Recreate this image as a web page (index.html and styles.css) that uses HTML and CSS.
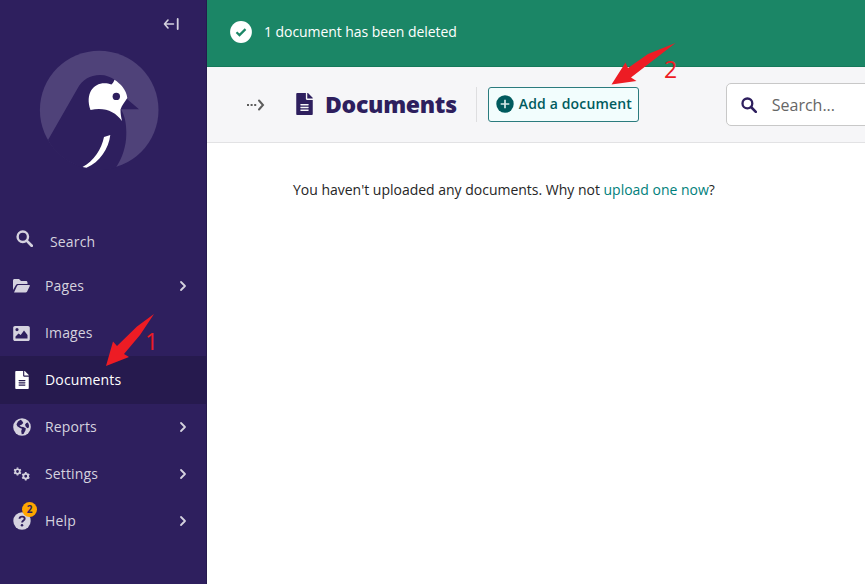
FILE: index.html
```html
<!DOCTYPE html>
<html lang="en">
<head>
<meta charset="utf-8">
<title>Documents</title>
<link rel="stylesheet" href="styles.css">
</head>
<body>
<svg class="defs" aria-hidden="true">
  <symbol id="search" viewBox="0 0 16 16"><circle cx="6.4" cy="6.4" r="4.9" fill="none" stroke="currentColor" stroke-width="2.3"/><path d="M10 10l4.8 4.800" stroke="currentColor" stroke-width="2.600" stroke-linecap="round"/></symbol>
  <symbol id="doc" viewBox="0 0 384 512"><path fill="currentColor" fill-rule="evenodd" d="M224 136V0H24C10.700 0 0 10.700 0 24v464c0 13.300 10.700 24 24 24h336c13.300 0 24-10.700 24-24V160H248c-13.200 0-24-10.800-24-24zM288 408c0 5-4 10-10 10H106c-6 0-10-5-10-10v-12c0-6 4-10 10-10h172c6 0 10 4 10 10zm0-65c0 6-4 10-10 10H106c-6 0-10-4-10-10v-12c0-6 4-10 10-10h172c6 0 10 4 10 10zm0-77v12c0 6-4 10-10 10H106c-6 0-10-4-10-10v-12c0-6 4-10 10-10h172c6 0 10 4 10 10zM384 122v6H256V0h6c6 0 12 3 17 7l98 98c4 5 7 11 7 17z"/></symbol>
  <symbol id="chevron" viewBox="0 0 8 12"><path d="M2 2l4 4-4 4" fill="none" stroke="currentColor" stroke-width="1.800" stroke-linecap="round" stroke-linejoin="round"/></symbol>
  <symbol id="gear" viewBox="-5 -5 10 10"><circle r="2.500" fill="none" stroke="currentColor" stroke-width="1.900"/><path stroke="currentColor" stroke-width="1.900" d="M0-4.400V-3M0 3v1.400M-3.800-2.200l1.200.7M2.600 1.500l1.200.7M-3.800 2.200l1.200-.7M2.600-1.500l1.200-.7"/></symbol>
</svg>
<div class="app">
  <aside class="sidebar">
    <div class="collapse">
      <svg width="18" height="14" viewBox="0 0 18 14" fill="none" stroke="currentColor" stroke-width="1.600" stroke-linecap="round" stroke-linejoin="round"><path d="M5 3L1.500 7 5 11M1.500 7h9"/><path d="M14.700 2v10" stroke-width="1.800"/></svg>
    </div>
    <div class="logo">
      <svg width="121" height="120" viewBox="0 0 121 120">
        <circle cx="60.200" cy="60" r="59.300" fill="#4f4279"/>
        <path fill="#2e1f5e" d="M9 90L38.500 38.500C43 30 51 25 61 25c6 0 11 2 15 5l12 19 12 10.200H82C86 66 87.500 74 87.300 84c0 12-4 24-10.300 33.500C52 125 22 114 9 90z"/>
        <path fill="#fff" d="M51.500 60C46 44 54 33.300 65.500 33.300c2.500 0 4.500.5 7 1.200 1.300-1.200 2.200-2.700 3-4.700 6 4 12 10 12.800 18.200C86 52 83 55 81.500 59.500c0 4 .5 7.500 1.500 11.500-7-9.500-17-14-31.500-11z"/>
        <circle cx="77.300" cy="46.400" r="3.700" fill="#2e1f5e"/>
        <path fill="#fff" d="M65 87l6.300-2c-1.500 13.500-10.500 27-23.800 32.800l-4-.9C55 111 62.500 99 65 87z"/>
      </svg>
    </div>
    <nav class="menu">
      <a class="item item-search"><svg class="icon" width="17" height="17"><use href="#search"/></svg><span>Search</span></a>
      <a class="item"><svg class="icon" width="17" height="14" viewBox="0 0 17 14" fill="currentColor"><path d="M0 11V1.500C0 .7.600 0 1.500 0H6l2 2h5c.8 0 1.500.7 1.500 1.500V5H5C4 5 3.300 5.500 2.800 6.300z"/><path d="M1 13.500L4 7c.3-.6.8-1 1.500-1h10.700c.6 0 .9.600.6 1.100L14 12.700c-.3.500-.8.800-1.400.8z"/></svg><span>Pages</span><svg class="chev" width="8" height="12"><use href="#chevron"/></svg></a>
      <a class="item"><svg class="icon" width="17" height="15" viewBox="0 0 17 15"><path fill="currentColor" fill-rule="evenodd" d="M2 0h13c1 0 1.800.8 1.800 1.800v11.400c0 1-.8 1.800-1.800 1.800H2C1 15 .2 14.200.2 13.200V1.800C.2.800 1 0 2 0zM4 2a1.600 1.600 0 1 0 0 3.200A1.600 1.600 0 0 0 4 2zM2.500 12.500h12V9L11 4.500 7.700 9 5.500 7.500l-3 3z"/></svg><span>Images</span></a>
      <a class="item active"><svg class="icon doc" width="14" height="18"><use href="#doc"/></svg><span>Documents</span></a>
      <a class="item"><svg class="icon" width="18" height="18" viewBox="0 0 18 18"><circle cx="9" cy="9" r="8.800" fill="currentColor"/><path fill="#2e1f5e" d="M7.500 1.800L5 3.500 3.500 6.200l.8 2L7 10l2 .8-.8 2.200.5 3.300 1.800-.3 2-3.700.3-2-2.600-1.300L8 8.700 6.500 7.500l2-.7L10.300 5 9 2.800zM13.200 5l-1.200 1.800.8 2 1.700 1.500 1.300-.8c.5-1.700.1-3.500-1-5z"/></svg><span>Reports</span><svg class="chev" width="8" height="12"><use href="#chevron"/></svg></a>
      <a class="item"><svg class="icon" width="18" height="14" viewBox="0 0 18 14"><use href="#gear" width="9" height="9"/><use href="#gear" x="8" y="4.500" width="9.500" height="9.500"/></svg><span>Settings</span><svg class="chev" width="8" height="12"><use href="#chevron"/></svg></a>
      <a class="item"><svg class="icon" width="18" height="18" viewBox="0 0 18 18"><circle cx="9" cy="9" r="8.700" fill="currentColor"/><path d="M6.500 6.800c.2-3 5.200-2.900 5.200-.1 0 1.900-2.600 1.800-2.600 3.800" fill="none" stroke="#2e1f5e" stroke-width="1.900"/><circle cx="9" cy="13.200" r="1.250" fill="#2e1f5e"/></svg><b class="badge">2</b><span>Help</span><svg class="chev" width="8" height="12"><use href="#chevron"/></svg></a>
    </nav>
    <div class="mark mark-one"><svg width="49" height="52" viewBox="0 0 49 52"><path fill="#ed1c24" d="M48 0L31 12.500 11 32 7 27.500 0 52 23 43l-5-3L34 21z"/></svg><i>1</i></div>
  </aside>
  <main class="main">
    <div class="message">
      <svg width="22" height="22" viewBox="0 0 22 22"><circle cx="11" cy="11" r="10.900" fill="#fff"/><path d="M6.500 11.300l3 2.800 6-6" fill="none" stroke="#1b8666" stroke-width="2.200"/></svg>
      <span>1 document has been deleted</span>
    </div>
    <header class="header">
      <svg class="crumb" width="19" height="12" viewBox="0 0 19 12" fill="none" stroke="#5c5c5c" stroke-width="2"><path d="M1 6h9.500" stroke-dasharray="2 1.600"/><path d="M13 1.500L17 6 13 10.500" stroke-linecap="round"/></svg>
      <svg class="title-icon" width="17" height="22"><use href="#doc"/></svg>
      <h1>Documents</h1>
      <div class="actions">
        <a class="add"><svg width="18" height="18" viewBox="0 0 18 18"><circle cx="9" cy="9" r="8.700" fill="#005b5e"/><path d="M9 4.700v8.600M4.700 9h8.600" stroke="#d5e9e9" stroke-width="1.700"/></svg><span>Add a document</span></a>
      </div>
      <div class="search"><svg width="16" height="16"><use href="#search"/></svg><span>Search...</span></div>
    </header>
    <p class="empty">You haven't uploaded any documents. Why not <a>upload one now</a>?</p>
    <div class="mark mark-two"><svg width="65" height="42" viewBox="0 0 65 42"><path fill="#ed1c24" d="M64.500 0L37 11 17 25l-2.500-5.500L.5 41.500l25-3.500-5.500-3.500L40 19z"/></svg><i>2</i></div>
  </main>
</div>
</body>
</html>
```

FILE: styles.css
```css
* { box-sizing: border-box; }
body { margin: 0; font: 14px/20px "Open Sans", sans-serif; color: #262626; overflow: hidden; }
svg { display: block; flex: none; }
.defs { position: absolute; width: 0; height: 0; }
.app { display: flex; width: 865px; height: 584px; background: #fff; }
.sidebar { position: relative; width: 207px; flex: none; background: #2e1f5e; color: #d5d2df; border-right: 1px solid #261a4e; }
.collapse { height: 50px; padding: 17px 0 0 163px; }
.logo { padding-left: 39px; height: 170px; }
.item { position: relative; display: flex; align-items: center; height: 47px; padding: 0 0 1px 45px; letter-spacing: 0.15px; }
.item .icon { position: absolute; left: 13px; }
.item .icon.doc { left: 15px; color: #fff; }
.item-search { height: 43px; padding: 0 0 0 50px; }
.item-search .icon { left: 16px; top: 10px; }
.item .chev { margin-left: auto; margin-right: 19px; }
.active { height: 48px; margin-top: -1px; background: #261a4e; color: #fff; padding-bottom: 0; }
.badge { position: absolute; left: 22px; top: 4px; width: 15px; height: 15px; border-radius: 50%; background: #ffa500; color: #2e1f5e; font-size: 10px; line-height: 15px; text-align: center; letter-spacing: 0; }
.main { position: relative; flex: 1; min-width: 0; overflow: hidden; }
.message { display: flex; align-items: center; gap: 12px; height: 67px; padding: 0 24px 3px 23px; background: #1b8666; color: #fff; border-bottom: 1px solid #15795a; letter-spacing: -0.06px; }
.header { display: flex; align-items: center; height: 76px; background: #f6f6f8; border-bottom: 1px solid #e2e2e4; }
.crumb { margin-left: 39px; }
.title-icon { margin-left: 31px; color: #2e1f5e; position: relative; top: -1px; }
h1 { width: 132px; margin: 0 0 1px 12px; font-size: 23px; line-height: 30px; font-weight: 800; letter-spacing: -0.3px; color: #2e1f5e; white-space: nowrap; }
.actions { display: flex; margin-left: 19px; padding-left: 11px; height: 35px; margin-bottom: 1px; border-left: 1px solid #dedee0; }
.add { display: flex; align-items: center; gap: 5px; width: 151px; height: 35px; padding-left: 7px; border: 1px solid #2b7b7e; border-radius: 3px; background: #f2fdfd; color: #005b5e; font-weight: 600; letter-spacing: 0.15px; white-space: nowrap; }
.search { display: flex; align-items: center; gap: 15px; flex: none; width: 170px; height: 43px; margin-left: 87px; padding-left: 14px; border: 1px solid #c8c8c8; border-radius: 5px; background: #fff; color: #2e1f5e; }
.search span { color: #666; font-size: 16px; }
.empty { margin: 37px 0 0 86px; white-space: nowrap; letter-spacing: -0.01px; }
.empty a { color: #00807b; }
.mark { position: absolute; }
.mark i { position: absolute; font: 23px/24px "Open Sans", sans-serif; color: #ed1c24; }
.mark-one { left: 106px; top: 314px; }
.mark-one i { left: 39px; top: 15px; }
.mark-two { left: 404px; top: 43px; }
.mark-two i { left: 53px; top: 14px; }
```
